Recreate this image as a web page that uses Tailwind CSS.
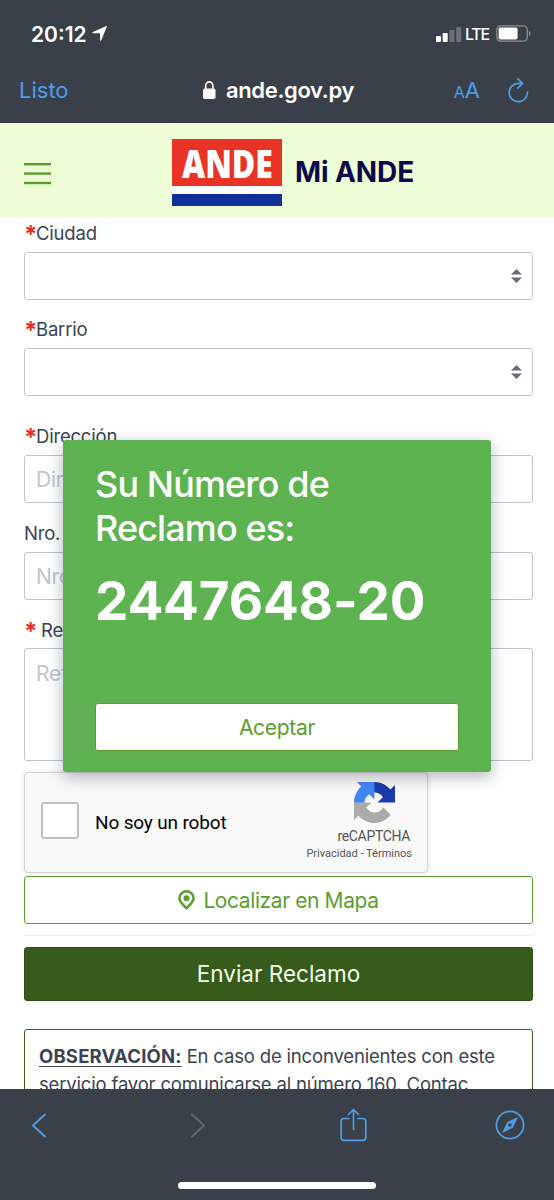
<!DOCTYPE html>
<html lang="es">
<head>
<meta charset="utf-8">
<title>Mi ANDE</title>
<script src="https://cdn.jsdelivr.net/npm/@tailwindcss/browser@4"></script>
</head>
<body class="bg-white">
<div class="relative flex h-[1200px] w-[554px] flex-col overflow-hidden bg-white font-['Inter',sans-serif] text-[#3b4351]">

  <!-- Status bar and address bar -->
  <header class="flex h-[123px] shrink-0 flex-col border-b border-[#2f353d] bg-[#3a4049] text-white">
    <div class="flex h-[67px] shrink-0 items-center pl-[31px] pr-[22px]">
      <span class="mt-px text-[21px] leading-none font-semibold">20:12</span>
      <svg class="ml-[5px] h-[15px] w-[15px]" viewBox="0 0 15 15" fill="#fff"><path d="M14.700.9 9.300 14.200c-.3.7-1.300.6-1.300-.2V7.300H1.100c-.9 0-1-1-.2-1.300L13.900.2c.7-.3 1.100.1.8.7Z"/></svg>
      <div class="ml-auto flex items-center">
        <svg class="h-[16px] w-[26px]" viewBox="0 0 26 16" fill="#fff"><rect x="0" y="10" width="5" height="6" rx="1"/><rect x="6.700" y="7" width="5" height="9" rx="1"/><rect x="13.400" y="4" width="5" height="12" rx="1" opacity=".25"/><rect x="20.200" y="1" width="5" height="15" rx="1" opacity=".25"/></svg>
        <span class="ml-[3px] text-[16px] leading-none font-medium tracking-[-1.200px]">LTE</span>
        <svg class="ml-[7px] h-[17px] w-[36px]" viewBox="0 0 36 17" fill="none"><rect x=".8" y=".8" width="30.500" height="15.400" rx="4" stroke="#8b8e94" stroke-width="1.300"/><rect x="2.600" y="2.600" width="19" height="11.800" rx="2" fill="#fff"/><path d="M33 6c2 .6 2 4.400 0 5Z" fill="#8b8e94"/></svg>
      </div>
    </div>
    <div class="grid h-[46px] shrink-0 grid-cols-[1fr_auto_1fr] items-center pl-[19px] pr-[25px]">
      <span class="justify-self-start text-[22px] leading-none text-[#4f9ce6]">Listo</span>
      <div class="ml-[9px] flex items-center">
        <svg class="mr-[10px] h-[18px] w-[13px]" viewBox="0 0 13 18" fill="none"><rect x="0" y="7.500" width="12.500" height="10.500" rx="1.800" fill="#fff"/><path d="M2.700 8V4.800a3.600 3.900 0 0 1 7.200 0V8" stroke="#fff" stroke-width="1.600"/></svg>
        <span class="text-[22px] leading-none font-semibold tracking-[-0.35px]">ande.gov.py</span>
      </div>
      <div class="flex items-center justify-self-end text-[#4f9ce6]">
        <span class="flex items-baseline leading-none"><span class="text-[16px]">A</span><span class="text-[22px]">A</span></span>
        <svg class="ml-[28px] h-[25px] w-[21px]" viewBox="0 0 21 25" fill="none" stroke="#4f9ce6" stroke-width="1.700" stroke-linecap="round" stroke-linejoin="round"><path d="M19.500 14a9.200 9.200 0 1 1-9.200-8.700h4.200M9.800.9l4.900 4.400-4.900 4.900"/></svg>
      </div>
    </div>
  </header>

  <!-- Site header -->
  <div class="flex h-[94px] shrink-0 items-center bg-[#edfdd5] pl-[24px]">
    <svg class="mt-[7px] h-[22px] w-[27px]" viewBox="0 0 27 22" fill="#5a9e32"><rect width="27" height="2.400" y="0"/><rect width="27" height="2.400" y="9.400"/><rect width="27" height="2.400" y="18.800"/></svg>
    <div class="ml-[121px] mt-[5px] flex h-[67px] w-[110px] flex-col bg-white">
      <div class="flex h-[47px] items-center justify-center bg-[#e93324]"><span class="scale-x-[0.82] font-['Open_Sans',sans-serif] text-[39px] leading-none font-extrabold text-white">ANDE</span></div>
      <div class="mt-auto h-[12px] bg-[#12309a]"></div>
    </div>
    <span class="ml-[13px] mt-[4px] text-[28px] leading-none font-bold tracking-[-0.1px] text-[#0c0a4b]">Mi ANDE</span>
  </div>

  <!-- Claim form -->
  <main class="flex min-h-0 flex-1 flex-col overflow-hidden pr-[21px] pl-[24px] text-[18.500px] tracking-[-0.2px]">
    <div class="flex h-[35px] shrink-0 items-center pb-[2px] leading-none"><b class="w-[12px] pt-[3px] text-[24px] leading-none text-[#e5301f]">*</b><span>Ciudad</span></div>
    <div class="flex h-[48px] shrink-0 items-center justify-end rounded-[3px] border-[1.500px] border-[#c0c3cc] pr-[10px]">
      <svg class="h-[14px] w-[11px]" viewBox="0 0 11 14" fill="#666b7a"><path d="M5.500 0 11 5.500H0ZM5.500 14 0 8.500h11Z"/></svg>
    </div>
    <div class="mt-[13px] flex h-[35px] shrink-0 items-center pb-[2px] leading-none"><b class="w-[12px] pt-[3px] text-[24px] leading-none text-[#e5301f]">*</b><span>Barrio</span></div>
    <div class="flex h-[48px] shrink-0 items-center justify-end rounded-[3px] border-[1.500px] border-[#c0c3cc] pr-[10px]">
      <svg class="h-[14px] w-[11px]" viewBox="0 0 11 14" fill="#666b7a"><path d="M5.500 0 11 5.500H0ZM5.500 14 0 8.500h11Z"/></svg>
    </div>
    <div class="mt-[24px] flex h-[35px] shrink-0 items-center pb-[2px] leading-none"><b class="w-[12px] pt-[3px] text-[24px] leading-none text-[#e5301f]">*</b><span>Dirección</span></div>
    <div class="flex h-[48px] shrink-0 items-center rounded-[3px] border-[1.500px] border-[#c0c3cc] pt-[2px] pl-[11px] text-[21px] text-[#c3c5cc]">Dirección</div>
    <div class="mt-[14px] flex h-[35px] shrink-0 items-center pb-[2px] leading-none"><span>Nro.</span></div>
    <div class="flex h-[48px] shrink-0 items-center rounded-[3px] border-[1.500px] border-[#c0c3cc] pt-[2px] pl-[11px] text-[21px] text-[#c3c5cc]">Nro.</div>
    <div class="mt-[13px] flex h-[35px] shrink-0 items-center pb-[1px] leading-none"><b class="w-[12px] pt-[3px] text-[24px] leading-none text-[#e5301f]">*</b><span class="ml-[5px]">Referencia</span></div>
    <div class="h-[113px] shrink-0 rounded-[3px] border-[1.500px] border-[#c0c3cc] pt-[9px] pl-[11px] text-[21px] text-[#c3c5cc]">Referencia</div>

    <div class="mt-[11px] flex h-[101px] w-[404px] shrink-0 rounded-[4px] border-[1.500px] border-[#d3d3d3] bg-[#f9f9f9] font-['Roboto',sans-serif] tracking-normal text-[#555] shadow-[0_0_4px_1px_rgba(0,0,0,0.08)]">
      <div class="mt-[29px] ml-[16px] h-[37px] w-[38px] rounded-[3px] border-[2.500px] border-[#c1c1c1] bg-white"></div>
      <span class="mt-[40px] ml-[16px] text-[19px] leading-none tracking-[-0.15px] text-black">No soy un robot</span>
      <div class="mr-[15px] ml-auto flex flex-col items-end pt-[9px]">
        <svg class="mr-[17px] h-[41px] w-[41px]" viewBox="0 0 64 64"><path fill="#1c3aa9" d="M64 31.955l-.033-1.370V4.687l-7.160 7.160C50.948 4.674 42.033.093 32.050.093c-10.400 0-19.622 4.960-25.458 12.640l11.736 11.860a15.550 15.550 0 0 1 4.754-5.334c2.050-1.600 4.952-2.906 8.968-2.906.485 0 .86.057 1.135.163 4.976.393 9.288 3.140 11.828 7.124l-8.307 8.307L64 31.953"/><path fill="#4285f4" d="M31.862.094l-1.370.033H4.594l7.160 7.160C4.580 13.147 0 22.060 0 32.046c0 10.400 4.960 19.622 12.640 25.458L24.500 45.768a15.550 15.550 0 0 1-5.334-4.754c-1.600-2.050-2.906-4.952-2.906-8.968 0-.485.057-.86.163-1.135.393-4.976 3.140-9.288 7.124-11.828l8.307 8.307L31.860.095"/><path fill="#ababab" d="M.001 32.045l.033 1.370v25.898l7.160-7.160c5.860 7.173 14.774 11.754 24.760 11.754 10.400 0 19.622-4.960 25.458-12.640l-11.736-11.860a15.550 15.550 0 0 1-4.754 5.334c-2.050 1.600-4.952 2.906-8.968 2.906-.485 0-.86-.057-1.135-.163-4.976-.393-9.288-3.140-11.828-7.124l8.307-8.307c-10.522.040-22.400.066-27.295-.005"/></svg>
        <span class="mt-[6px] mr-[2px] text-[14px] leading-none tracking-[-0.350px]">reCAPTCHA</span>
        <span class="mt-[5px] text-[11px] leading-none">Privacidad - Términos</span>
      </div>
    </div>

    <div class="mt-[3px] flex h-[48px] shrink-0 items-center justify-center rounded-[3px] border-[1.500px] border-[#5a9e32] text-[21px] leading-none tracking-[-0.400px] text-[#5a9e32]">
      <svg class="mr-[8px] h-[20px] w-[17px]" viewBox="0 0 17 20" fill="none"><path d="M8.500 18.200C5 14.700 1.400 12 1.400 8.300a7.100 7 0 0 1 14.200 0c0 3.700-3.600 6.400-7.100 9.900Z" stroke="#5a9e32" stroke-width="2.500"/><circle cx="8.500" cy="8.300" r="3" fill="#5a9e32"/></svg>
      <span>Localizar en Mapa</span>
    </div>
    <div class="mt-[11px] h-px shrink-0 bg-[#eceef2]"></div>
    <div class="mt-[11px] flex h-[54px] shrink-0 items-center justify-center rounded-[3px] border border-[#2d4f16] bg-[#365b1a] pt-px text-[22.500px] leading-none tracking-normal text-[#f4fdea]"><span>Enviar Reclamo</span></div>
    <div class="mt-[28px] h-[120px] shrink-0 rounded-[3px] border-[1.500px] border-[#365b1a] pt-[13px] pl-[14px] leading-[27.500px] tracking-[-0.170px] whitespace-nowrap">
      <div><b class="tracking-[0.180px] underline decoration-1 underline-offset-[3px]">OBSERVACIÓN:</b> En caso de inconvenientes con este</div>
      <div>servicio favor comunicarse al número 160. Contac</div>
    </div>
  </main>

  <!-- Browser toolbar -->
  <footer class="flex h-[111px] shrink-0 flex-col items-center bg-[#3a4049]">
    <div class="flex h-[72px] w-full items-center pl-[31px]">
      <svg class="h-[25px] w-[16px]" viewBox="0 0 16 25" fill="none" stroke="#4f9ce6" stroke-width="2" stroke-linecap="round" stroke-linejoin="round"><path d="M14 1.500 2 12.500l12 11"/></svg>
      <svg class="ml-[143px] h-[25px] w-[16px]" viewBox="0 0 16 25" fill="none" stroke="#62676e" stroke-width="2" stroke-linecap="round" stroke-linejoin="round"><path d="m2 1.500 12 11-12 11"/></svg>
      <svg class="ml-[134px] h-[34px] w-[27px]" viewBox="0 0 27 34" fill="none" stroke="#4f9ce6" stroke-width="1.700" stroke-linecap="round" stroke-linejoin="round"><path d="M9 10.500H4a2.800 2.800 0 0 0-2.800 2.800V29.500A2.800 2.800 0 0 0 4 32.300h19a2.800 2.800 0 0 0 2.800-2.800V13.300a2.800 2.800 0 0 0-2.800-2.800h-5M13.500 21.500V1.500M8.500 6.500l5-5 5 5"/></svg>
      <svg class="ml-[128px] h-[30px] w-[30px]" viewBox="0 0 30 30" fill="none"><circle cx="15" cy="15" r="13.600" stroke="#4f9ce6" stroke-width="1.800"/><path d="M23 7 17.800 17.800 7 23l5.200-10.800Z" fill="#4f9ce6"/><circle cx="15" cy="15" r="1.700" fill="#3a4049"/></svg>
    </div>
    <div class="mt-[21px] h-[7px] w-[198px] rounded-full bg-white"></div>
  </footer>

  <!-- Confirmation dialog -->
  <div class="absolute top-[440px] left-[63px] flex h-[332px] w-[428px] flex-col rounded-[3px] bg-[#5db350] px-[32px] text-white shadow-[0_5px_16px_rgba(40,45,70,0.35)]">
    <div class="pt-[22px] text-[36px] leading-[44px] font-medium tracking-[-0.880px]">Su Número de<br>Reclamo es:</div>
    <div class="mt-[24px] text-[53px] leading-[54px] font-bold tracking-[-0.150px]">2447648-20</div>
    <div class="mt-auto mb-[21px] flex h-[48px] items-center justify-center rounded-[3px] border border-[#5a9e32] bg-white text-[21px] leading-none tracking-[-0.300px] text-[#5a9e32]">Aceptar</div>
  </div>
</div>
</body>
</html>
